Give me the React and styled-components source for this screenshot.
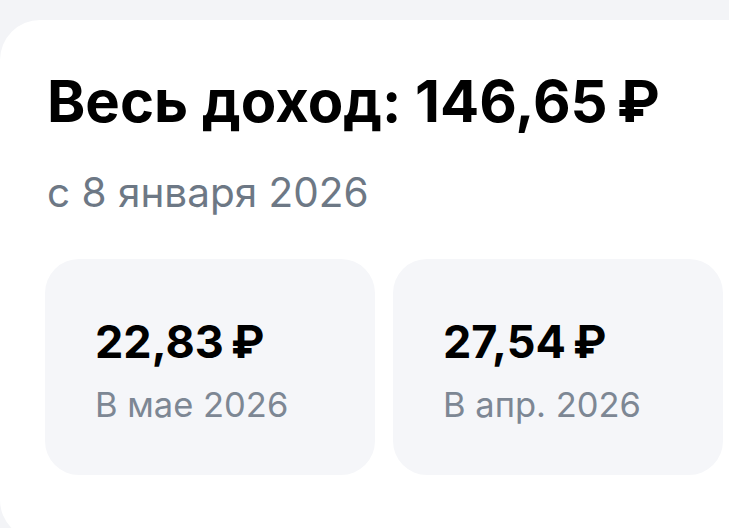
import React from 'react';
import styled, { createGlobalStyle } from 'styled-components';

const GlobalStyle = createGlobalStyle`
  html, body {
    margin: 0;
    padding: 0;
    background: #f3f4f7;
  }
  body {
    font-family: Inter, "Noto Sans", sans-serif;
    -webkit-font-smoothing: antialiased;
  }
`;

const Page = styled.div`
  padding-top: 20px;
  height: 528px;
  box-sizing: border-box;
  overflow: hidden;
`;

const Card = styled.section`
  background: #ffffff;
  border-radius: 40px 0 0 40px;
  height: 520px;
  box-sizing: border-box;
  padding: 46px 0 0 45px;
`;

const Title = styled.h1`
  margin: 0 0 0 2px;
  font-size: 58px;
  font-weight: 700;
  line-height: 70px;
  color: #000000;
`;

const Since = styled.div`
  margin: 33px 0 0 2px;
  font-size: 40.5px;
  font-weight: 400;
  line-height: 48px;
  color: #6d7885;
`;

const Months = styled.div`
  display: grid;
  grid-template-columns: 330px 330px;
  gap: 18px;
  margin-top: 42px;
`;

const Tile = styled.div`
  height: 216px;
  box-sizing: border-box;
  border-radius: 34px;
  background: #f5f6f9;
  padding: 56px 0 0 50px;
`;

const Amount = styled.div`
  font-size: 45px;
  font-weight: 700;
  line-height: 54px;
  letter-spacing: -0.5px;
  color: #000000;
`;

const Period = styled.div`
  margin-top: 15px;
  font-size: 34.5px;
  line-height: 42px;
  color: #7d8794;
`;

const months = [
  { amount: '22,83', label: 'В мае 2026' },
  { amount: '27,54', label: 'В апр. 2026' }
];

export default function App() {
  return (
    <Page>
      <GlobalStyle />
      <Card>
        <Title>Весь доход: 146,65{'\u202F'}₽</Title>
        <Since>с 8 января 2026</Since>
        <Months>
          {months.map(m => (
            <Tile key={m.label}>
              <Amount>{m.amount}{'\u202F'}₽</Amount>
              <Period>{m.label}</Period>
            </Tile>
          ))}
        </Months>
      </Card>
    </Page>
  );
}
